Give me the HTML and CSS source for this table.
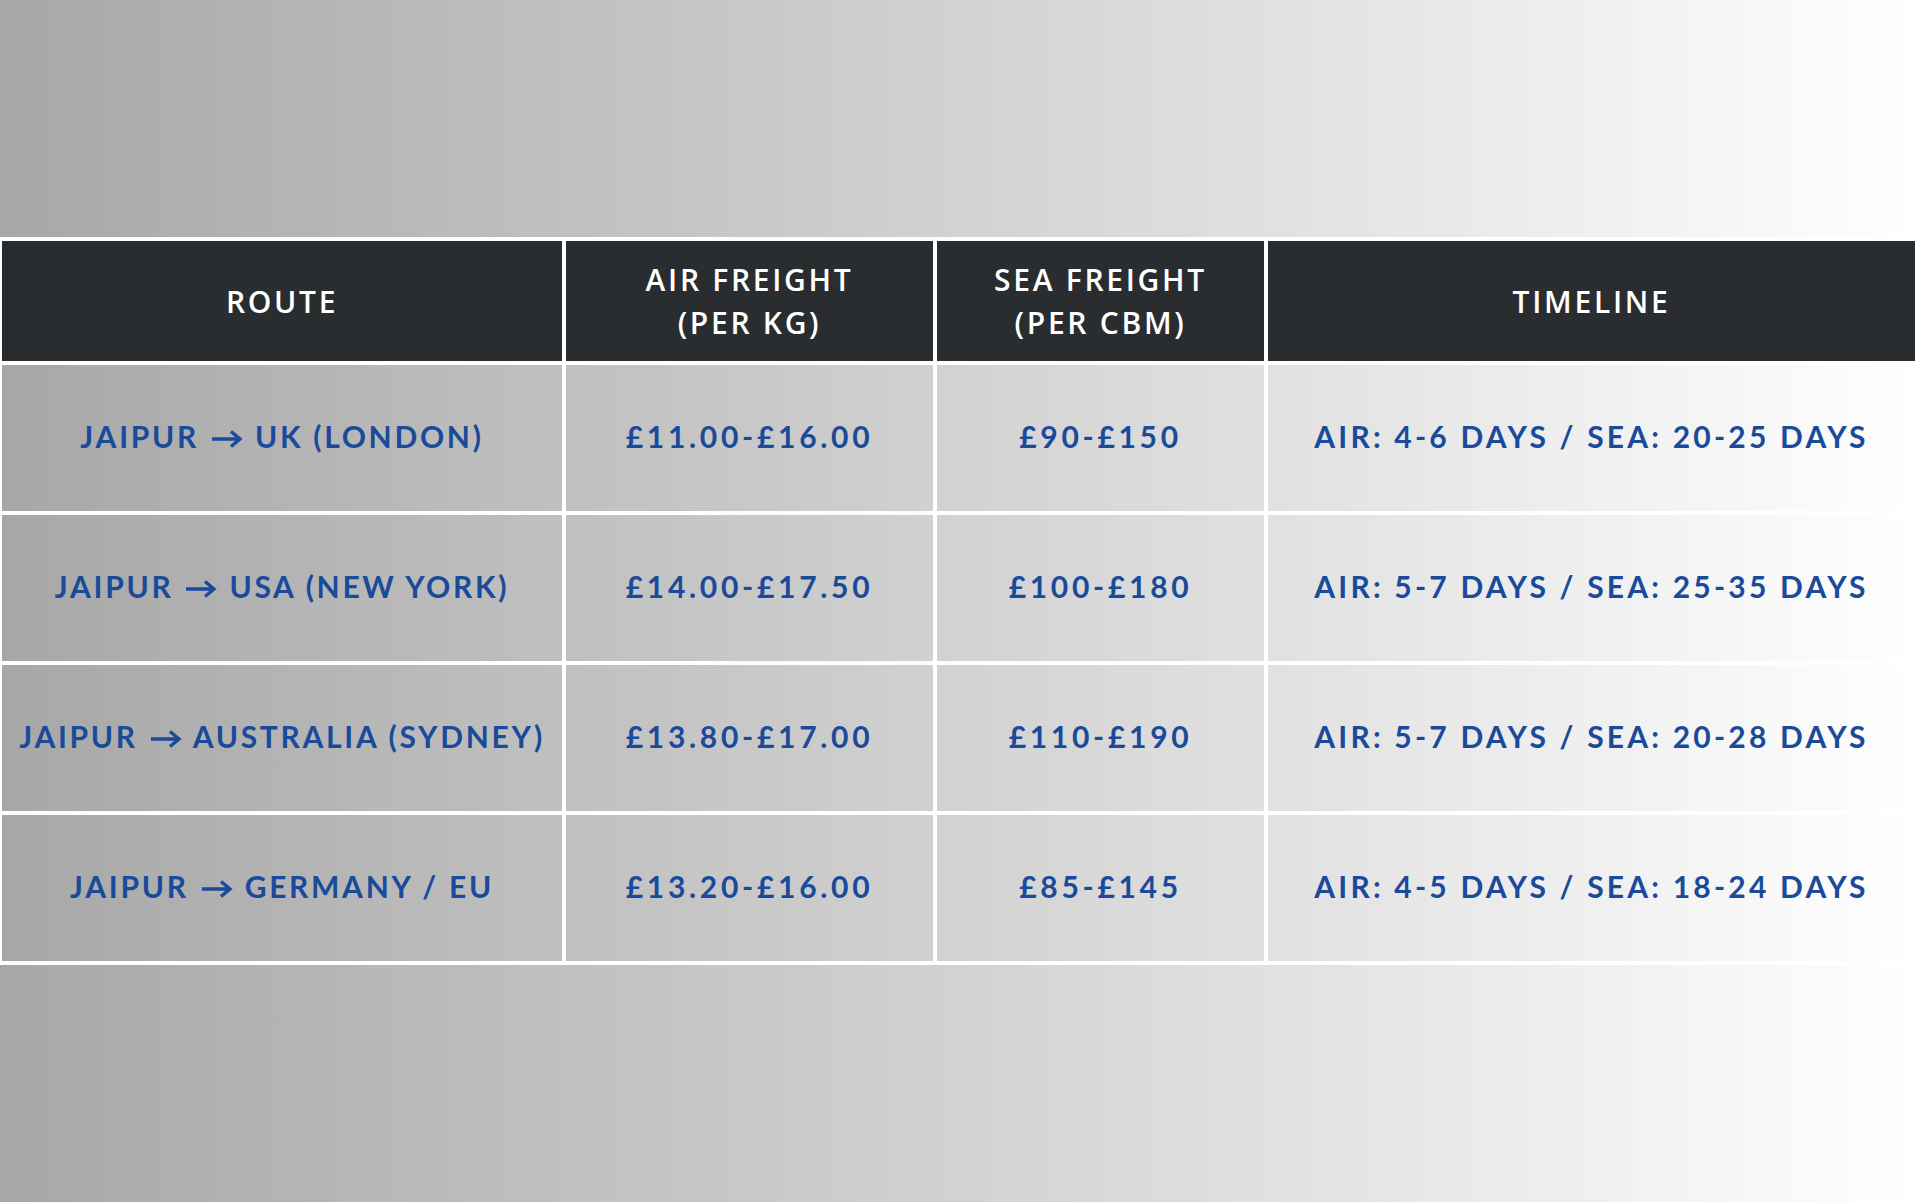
FILE: index.html
```html
<!DOCTYPE html>
<html lang="en">
<head>
<meta charset="utf-8">
<title>Freight Rates from Jaipur</title>
<link rel="stylesheet" href="styles.css">
</head>
<body>
<main class="page">
  <div class="rates">
    <div class="cell head"><span>ROUTE</span></div>
    <div class="cell head"><span>AIR FREIGHT<br>(PER KG)</span></div>
    <div class="cell head"><span>SEA FREIGHT<br>(PER CBM)</span></div>
    <div class="cell head"><span>TIMELINE</span></div>

    <div class="cell"><span>JAIPUR <svg class="arrow" viewBox="0 0 32 18"><path d="M1 9H29M20 1.5L29 9L20 16.5"/></svg> UK (LONDON)</span></div>
    <div class="cell price"><span>£11.00-£16.00</span></div>
    <div class="cell price"><span>£90-£150</span></div>
    <div class="cell time"><span>AIR: 4-6 DAYS / SEA: 20-25 DAYS</span></div>

    <div class="cell"><span>JAIPUR <svg class="arrow" viewBox="0 0 32 18"><path d="M1 9H29M20 1.5L29 9L20 16.5"/></svg> USA (NEW YORK)</span></div>
    <div class="cell price"><span>£14.00-£17.50</span></div>
    <div class="cell price"><span>£100-£180</span></div>
    <div class="cell time"><span>AIR: 5-7 DAYS / SEA: 25-35 DAYS</span></div>

    <div class="cell"><span>JAIPUR <svg class="arrow" viewBox="0 0 32 18"><path d="M1 9H29M20 1.5L29 9L20 16.5"/></svg> AUSTRALIA (SYDNEY)</span></div>
    <div class="cell price"><span>£13.80-£17.00</span></div>
    <div class="cell price"><span>£110-£190</span></div>
    <div class="cell time"><span>AIR: 5-7 DAYS / SEA: 20-28 DAYS</span></div>

    <div class="cell"><span>JAIPUR <svg class="arrow" viewBox="0 0 32 18"><path d="M1 9H29M20 1.5L29 9L20 16.5"/></svg> GERMANY / EU</span></div>
    <div class="cell price"><span>£13.20-£16.00</span></div>
    <div class="cell price"><span>£85-£145</span></div>
    <div class="cell time"><span>AIR: 4-5 DAYS / SEA: 18-24 DAYS</span></div>
  </div>
</main>
</body>
</html>
```

FILE: styles.css
```css
html, body {
  margin: 0;
  padding: 0;
}

body {
  width: 1920px;
  height: 1202px;
  overflow: hidden;
  background: linear-gradient(90deg, #a7a7a7 0%, #c9c9c9 40%, #e4e4e4 70%, #ffffff 100%);
  font-family: "Lato", "Open Sans", sans-serif;
}

.page {
  padding-top: 237px;
}

.rates {
  display: grid;
  grid-template-columns: 560px 367px 327px 647px;
  grid-template-rows: 120px repeat(4, 146px);
  gap: 4px;
  padding: 4px 3px 4px 2px;
  width: max-content;
  background: #ffffff;
}

.cell {
  display: flex;
  align-items: center;
  justify-content: center;
  padding-bottom: 5px;
  text-align: center;
  background-image: linear-gradient(90deg, #a7a7a7 0%, #c9c9c9 40%, #e4e4e4 70%, #ffffff 100%);
  background-attachment: fixed;
  color: #1a4a9a;
  font-size: 30px;
  font-weight: 700;
  letter-spacing: 2.7px;
  white-space: nowrap;
}

.cell.price {
  letter-spacing: 3.7px;
}

.cell.time {
  letter-spacing: 3.2px;
}

.cell.head {
  padding-bottom: 0;
  background: #2a2d30;
  color: #ffffff;
  font-family: "Open Sans", "Lato", sans-serif;
  font-size: 30px;
  font-weight: 600;
  line-height: 43px;
  letter-spacing: 2.7px;
}

.arrow {
  width: 32px;
  height: 18px;
  margin: 0 2px;
  fill: none;
  stroke: #1a4a9a;
  stroke-width: 3.4;
  stroke-linecap: butt;
  stroke-linejoin: miter;
}
```
